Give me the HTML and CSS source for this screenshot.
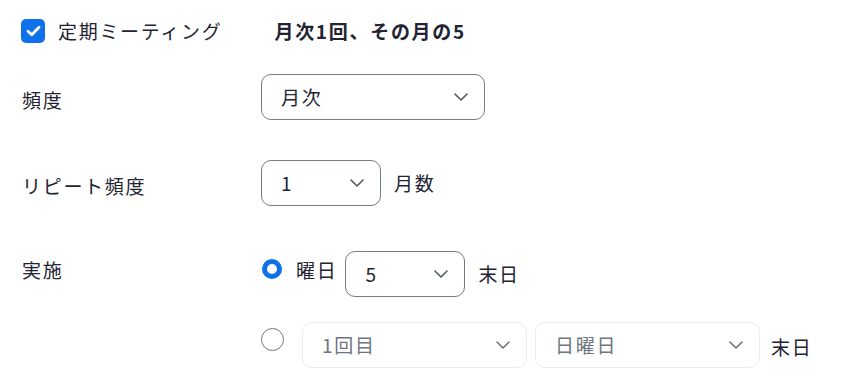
FILE: index.html
```html
<!DOCTYPE html>
<html lang="ja">
<head>
<meta charset="utf-8">
<link rel="stylesheet" href="styles.css">
</head>
<body>
<div class="page">
  <div class="head-row">
    <span class="checkbox">
      <svg width="15" height="12" viewBox="0 0 15 12"><path d="M2 6.2l3.8 3.6L13 2.2" fill="none" stroke="#fff" stroke-width="2.8" stroke-linecap="round" stroke-linejoin="round"/></svg>
    </span>
    <span class="head-label">定期ミーティング</span>
    <span class="summary">月次1回、その月の5</span>
  </div>

  <div class="row row-freq">
    <div class="label label-mid">頻度</div>
    <div class="select w224"><span>月次</span><svg class="chev" width="14" height="8" viewBox="0 0 14 8"><path d="M1 1l6 6 6-6" fill="none" stroke="#525a63" stroke-width="1.6" stroke-linecap="round" stroke-linejoin="round"/></svg></div>
  </div>

  <div class="row row-repeat">
    <div class="label label-mid">リピート頻度</div>
    <div class="select w120"><span>1</span><svg class="chev" width="14" height="8" viewBox="0 0 14 8"><path d="M1 1l6 6 6-6" fill="none" stroke="#525a63" stroke-width="1.6" stroke-linecap="round" stroke-linejoin="round"/></svg></div>
    <span class="unit">月数</span>
  </div>

  <div class="row row-occurs">
    <div class="label label-top">実施</div>
    <div class="options">
      <div class="option opt1">
        <span class="radio checked"></span>
        <span class="opt-text">曜日</span>
        <div class="select w120 sel-day"><span>5</span><svg class="chev" width="14" height="8" viewBox="0 0 14 8"><path d="M1 1l6 6 6-6" fill="none" stroke="#525a63" stroke-width="1.6" stroke-linecap="round" stroke-linejoin="round"/></svg></div>
        <span class="tail tail1">末日</span>
      </div>
      <div class="option opt2">
        <span class="radio"></span>
        <div class="select disabled w225 sel-a"><span>1回目</span><svg class="chev" width="14" height="8" viewBox="0 0 14 8"><path d="M1 1l6 6 6-6" fill="none" stroke="#6e7680" stroke-width="1.6" stroke-linecap="round" stroke-linejoin="round"/></svg></div>
        <div class="select disabled w225 sel-b"><span>日曜日</span><svg class="chev" width="14" height="8" viewBox="0 0 14 8"><path d="M1 1l6 6 6-6" fill="none" stroke="#6e7680" stroke-width="1.6" stroke-linecap="round" stroke-linejoin="round"/></svg></div>
        <span class="tail tail2">末日</span>
      </div>
    </div>
  </div>
</div>
</body>
</html>
```

FILE: styles.css
```css
* { box-sizing: border-box; }
html, body { margin: 0; padding: 0; background: #fff; }
body {
  font-family: "Noto Sans CJK JP", "Noto Sans", sans-serif;
  font-size: 19px;
  letter-spacing: 1.7px;
  color: #232333;
  width: 841px;
  height: 379px;
  overflow: hidden;
}
.page { padding: 19px 0 0 21px; }

.head-row { display: flex; align-items: center; height: 24px; }
.checkbox {
  width: 24px; height: 24px; border-radius: 5px;
  background: #0e71eb;
  display: flex; align-items: center; justify-content: center;
}
.head-label { margin-left: 13px; line-height: 24px; }
.summary { margin-left: 52px; font-weight: 700; line-height: 24px; }

.row { display: flex; align-items: center; }
.row-freq { margin-top: 31px; }
.row-repeat { margin-top: 40px; }
.row-occurs { margin-top: 45px; align-items: flex-start; }

.label { width: 240px; flex: none; padding-left: 1px; line-height: 24px; }
.label-mid { padding-top: 5px; }
.label-top { margin-top: 7px; }

.select {
  height: 46px;
  border: 1px solid #737b85;
  border-radius: 10px;
  display: flex; align-items: center; justify-content: space-between;
  padding: 0 16px 0 19px;
  flex: none;
}
.select span { line-height: 24px; }
.select.disabled { border-color: #ececf0; color: #6e7680; }
.w224 { width: 224px; }
.w120 { width: 120px; }
.w225 { width: 225px; }

.unit { margin-left: 13px; line-height: 24px; }

.options { display: flex; flex-direction: column; }
.option { display: flex; align-items: flex-start; }
.opt2 { margin-top: 25px; }

.radio {
  flex: none;
  width: 23px; height: 23px; border-radius: 50%;
  border: 1px solid #6e7680;
  margin-top: 6px;
}
.radio.checked {
  width: 20px; height: 20px;
  border: 5px solid #0e71eb;
  margin: 8px 2px 0 1px;
}
.opt-text { margin: 7px 0 0 12px; line-height: 24px; }
.sel-day { margin-left: 8px; }
.sel-a { margin-left: 18px; }
.sel-b { margin-left: 8px; }
.tail { align-self: center; line-height: 24px; }
.tail1 { margin-left: 13px; }
.tail2 { margin-left: 11px; padding-top: 4px; }
```
